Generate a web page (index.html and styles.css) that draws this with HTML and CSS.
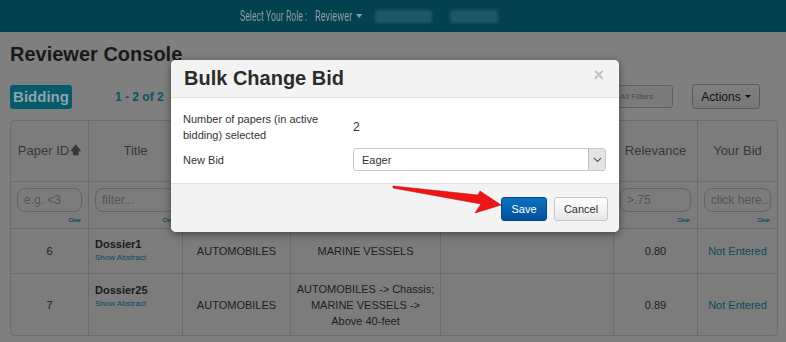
FILE: index.html
```html
<!DOCTYPE html>
<html>
<head>
<meta charset="utf-8">
<link rel="stylesheet" href="styles.css">
</head>
<body>
<div class="navbar">
  <span class="nav-label">Select Your Role :</span>
  <span class="nav-role">Reviewer <span class="nav-caret"></span></span>
  <span class="blur blur-a"></span>
  <span class="blur blur-b"></span>
</div>

<div class="page">
  <h1 class="title">Reviewer Console</h1>
  <div class="toolbar">
    <span class="badge">Bidding</span>
    <span class="count">1 - 2 of 2</span>
    <span class="spacer"></span>
    <span class="btn-filters">Clear All Filters</span>
    <span class="btn-actions">Actions <span class="caret-dark"></span></span>
  </div>

  <div class="grid">
    <div class="c hd">Paper ID<span class="arrow-up">&#129093;</span></div>
    <div class="c hd bl">Title</div>
    <div class="c hd bl"></div>
    <div class="c hd bl"></div>
    <div class="c hd bl"></div>
    <div class="c hd bl">Relevance</div>
    <div class="c hd bl">Your Bid</div>

    <div class="c ft bt"><span class="inp">e.g. &lt;3</span><span class="clear">Clear</span></div>
    <div class="c ft bt bl"><span class="inp">filter...</span><span class="clear">Clear</span></div>
    <div class="c ft bt bl"></div>
    <div class="c ft bt bl"></div>
    <div class="c ft bt bl"></div>
    <div class="c ft bt bl"><span class="inp">&gt;.75</span><span class="clear">Clear</span></div>
    <div class="c ft bt bl"><span class="inp">click here...</span><span class="clear">Clear</span></div>

    <div class="c r1 bt">6</div>
    <div class="c r1 bt bl ttl"><b>Dossier1</b><span class="abs">Show Abstract</span></div>
    <div class="c r1 bt bl">AUTOMOBILES</div>
    <div class="c r1 bt bl">MARINE VESSELS</div>
    <div class="c r1 bt bl"></div>
    <div class="c r1 bt bl">0.80</div>
    <div class="c r1 bt bl link">Not Entered</div>

    <div class="c r2 bt">7</div>
    <div class="c r2 bt bl ttl"><b>Dossier25</b><span class="abs">Show Abstract</span></div>
    <div class="c r2 bt bl">AUTOMOBILES</div>
    <div class="c r2 bt bl">AUTOMOBILES -&gt; Chassis;<br>MARINE VESSELS -&gt;<br>Above 40-feet</div>
    <div class="c r2 bt bl"></div>
    <div class="c r2 bt bl">0.89</div>
    <div class="c r2 bt bl link">Not Entered</div>
  </div>
</div>

<div class="modal">
  <div class="m-head">
    <span class="m-title">Bulk Change Bid</span>
    <span class="m-close">&times;</span>
  </div>
  <div class="m-body">
    <div class="m-row">
      <div class="m-label">Number of papers (in active<br>bidding) selected</div>
      <div class="m-val">2</div>
    </div>
    <div class="m-row">
      <div class="m-label">New Bid</div>
      <div class="m-select"><span>Eager</span><span class="m-sel-btn"><svg width="9" height="6" viewBox="0 0 9 6"><path d="M0.8 0.8 L4.5 4.5 L8.2 0.8" fill="none" stroke="#555" stroke-width="1.1"/></svg></span></div>
    </div>
  </div>
  <div class="m-foot">
    <span class="btn-save">Save</span>
    <span class="btn-cancel">Cancel</span>
  </div>
</div>

<svg class="red-arrow" width="125" height="40" viewBox="0 0 125 40">
  <polygon points="8,6 93,15 95,11 116,25 90,33 96,24 8,8" fill="#ee1515" stroke="#c40c0c" stroke-width="0.6" stroke-linejoin="round"/>
</svg>
</body>
</html>
```

FILE: styles.css
```css
* { box-sizing: border-box; }
html, body { margin: 0; padding: 0; }
body {
  width: 786px;
  height: 342px;
  overflow: hidden;
  background: #7f7f7f;
  font-family: "Liberation Sans", Arial, sans-serif;
  color: #1a1a1a;
  position: relative;
}

.navbar {
  height: 32px;
  background: #02414f;
  display: flex;
  align-items: center;
  padding-left: 240px;
  font-family: Roboto, "Liberation Sans", sans-serif;
  color: #8d9d9f;
  font-size: 14.5px;
}
.nav-label {
  display: inline-block;
  width: 66px;
  white-space: nowrap;
  transform: scaleX(0.6);
  transform-origin: left center;
  margin-right: 9px;
}
.nav-role {
  display: inline-flex;
  align-items: center;
  width: 60px;
  white-space: nowrap;
  transform: scaleX(0.64);
  transform-origin: left center;
}
.nav-caret {
  display: inline-block;
  margin-left: 6px;
  border-left: 5px solid transparent;
  border-right: 5px solid transparent;
  border-top: 4px solid #8d9d9f;
}
.blur {
  display: inline-block;
  height: 13px;
  background: #1d5865;
  filter: blur(1.5px);
  border-radius: 2px;
}
.blur-a { width: 57px; }
.blur-b { width: 48px; margin-left: 18px; }

.page { padding: 0 8px 0 10px; }
.title {
  margin: 10px 0 0;
  font-size: 20px;
  line-height: 24px;
  font-weight: bold;
  color: #191919;
}
.toolbar {
  margin-top: 18px;
  height: 25px;
  display: flex;
  align-items: center;
}
.badge {
  width: 62px;
  height: 24px;
  background: #065a6b;
  color: #90a4aa;
  border-radius: 3px;
  font-weight: bold;
  font-size: 15px;
  display: flex;
  align-items: center;
  justify-content: center;
}
.count {
  margin-left: 43px;
  color: #0b5266;
  font-weight: bold;
  font-size: 12px;
}
.spacer { flex: 1; }
.btn-filters {
  width: 120px;
  height: 23px;
  border: 1px solid #5f5f5f;
  border-radius: 3px;
  background: #7b7b7b;
  color: #4a4a4a;
  font-size: 8px;
  display: flex;
  align-items: center;
  justify-content: flex-end;
  padding-right: 19px;
}
.btn-actions {
  margin-left: 19px;
  margin-right: 18px;
  width: 68px;
  height: 25px;
  border: 1px solid #5a5a5a;
  border-radius: 3px;
  background: linear-gradient(#808080, #777);
  color: #111;
  font-size: 12px;
  display: flex;
  align-items: center;
  justify-content: center;
}
.caret-dark {
  display: inline-block;
  margin-left: 4px;
  border-left: 3px solid transparent;
  border-right: 3px solid transparent;
  border-top: 3px solid #111;
}

.grid {
  margin-top: 11px;
  width: 768px;
  border: 1px solid #6c6c6c;
  border-radius: 4px;
  background: #7c7c7c;
  display: grid;
  grid-template-columns: 77px 94px 108px 150px 173px 84px 80px;
  grid-template-rows: 60px 47px 45px 62px;
  font-size: 11px;
  color: #1c1c1c;
}
.c {
  display: flex;
  align-items: center;
  justify-content: center;
  text-align: center;
  line-height: 16px;
  position: relative;
}
.bl { border-left: 1px solid #6c6c6c; }
.bt { border-top: 1px solid #6c6c6c; }
.hd { font-size: 13px; color: #383838; }
.arrow-up { font-size: 11px; font-family: "DejaVu Sans", sans-serif; font-weight: bold; margin-left: 1px; }
.ft { padding: 6px 6px 0 6px; align-items: flex-start; }
.inp {
  width: 100%;
  height: 24px;
  border: 1px solid #646464;
  border-radius: 8px;
  display: flex;
  align-items: center;
  padding-left: 6px;
  font-size: 12px;
  color: #555;
  text-align: left;
  white-space: nowrap;
  overflow: hidden;
}
.clear {
  position: absolute;
  right: 7px;
  bottom: 5px;
  font-size: 5px;
  line-height: 6px;
  font-weight: bold;
  color: #0b4a5b;
}
.ttl {
  flex-direction: column;
  align-items: flex-start;
  padding-left: 6px;
  text-align: left;
}
.r1.ttl { padding-bottom: 2px; }
.r2.ttl { justify-content: flex-start; padding-top: 9px; }
.ttl b { font-size: 11px; color: #1a1a1a; line-height: 14px; }
.abs { font-size: 8px; color: #0c4a5e; line-height: 11px; margin-top: 1px; }
.link { color: #0b4b5e; }

.modal {
  position: absolute;
  left: 171px;
  top: 60px;
  width: 448px;
  height: 172px;
  background: #fff;
  border-radius: 5px;
  box-shadow: 0 2px 8px rgba(0,0,0,0.45);
  overflow: hidden;
  display: flex;
  flex-direction: column;
  color: #333;
}
.m-head {
  height: 38px;
  background: #f3f3f3;
  border-bottom: 1px solid #e3e3e3;
  display: flex;
  align-items: center;
  justify-content: space-between;
  padding: 0 15px 0 13px;
}
.m-title { font-size: 20px; font-weight: bold; color: #2b2b2b; }
.m-close { font-size: 18px; font-weight: bold; color: #c2c2c2; margin-top: -6px; }
.m-body {
  height: 85px;
  padding: 13px 12px 0 12px;
  font-size: 11px;
  line-height: 16px;
}
.m-row { display: flex; align-items: center; }
.m-row + .m-row { margin-top: 5px; }
.m-label { width: 170px; }
.m-val { font-size: 12px; }
.m-select {
  width: 253px;
  height: 23px;
  border: 1px solid #c8c8c8;
  border-radius: 3px;
  display: flex;
  align-items: center;
  justify-content: space-between;
  padding-left: 8px;
  font-size: 11px;
  overflow: hidden;
}
.m-sel-btn {
  width: 17px;
  height: 100%;
  background: #e4e4e4;
  border-left: 1px solid #bbb;
  display: flex;
  align-items: center;
  justify-content: center;
}
.m-foot {
  flex: 1;
  background: #f3f3f3;
  border-top: 1px solid #e0e0e0;
  display: flex;
  justify-content: flex-end;
  align-items: flex-start;
  padding: 13px 11px 0 0;
  gap: 7px;
}
.btn-save, .btn-cancel {
  height: 24px;
  border-radius: 3px;
  font-size: 11px;
  display: flex;
  align-items: center;
  justify-content: center;
}
.btn-save {
  width: 46px;
  background: linear-gradient(#0a72c2, #04509a);
  border: 1px solid #04468a;
  color: #fff;
}
.btn-cancel {
  width: 54px;
  background: linear-gradient(#fff, #e6e6e6);
  border: 1px solid #c6c6c6;
  color: #333;
}
.red-arrow {
  position: absolute;
  left: 385px;
  top: 180px;
}
```
